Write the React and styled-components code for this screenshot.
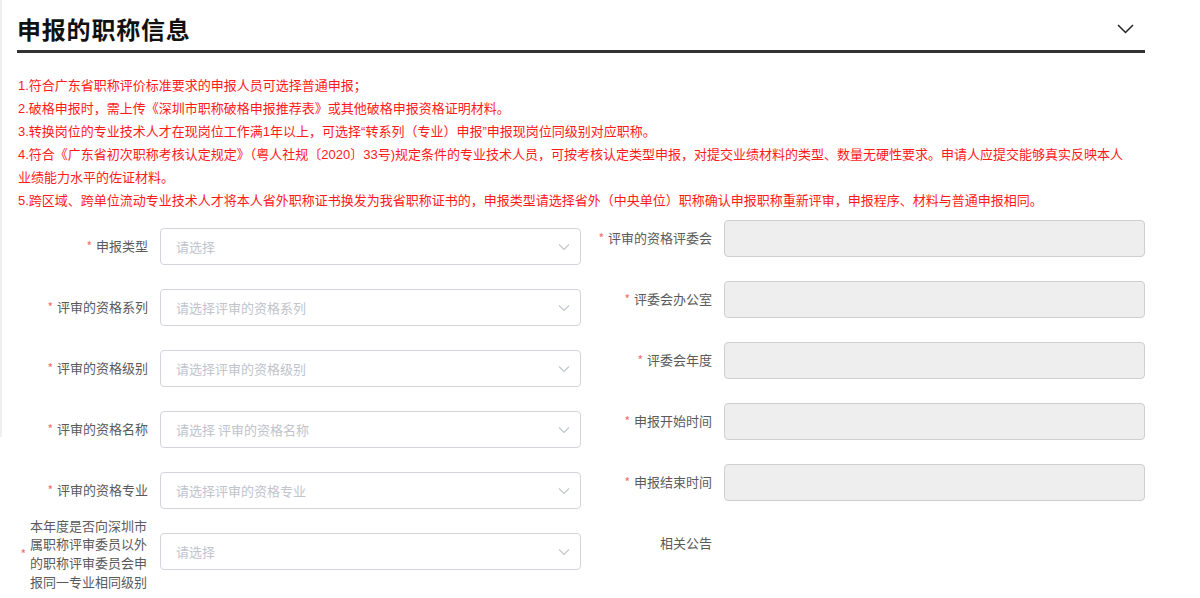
import React from "react";
import styled, { createGlobalStyle } from "styled-components";

const GlobalStyle = createGlobalStyle`
  html, body {
    margin: 0;
    padding: 0;
    background: #ffffff;
  }
  body {
    font-family: "Noto Sans CJK SC", "Noto Sans", sans-serif;
    font-size: 13px;
    color: #606266;
  }
  * { box-sizing: border-box; }
`;

const Page = styled.div`
  position: relative;
  width: 1200px;
  height: 598px;
  overflow: hidden;
  padding-left: 17px;
  &::before {
    content: "";
    position: absolute;
    left: 0;
    top: 0;
    width: 2px;
    height: 437px;
    background: #efefef;
  }
`;

const Section = styled.section`
  width: 1128px;
`;

const Header = styled.div`
  display: flex;
  align-items: center;
  justify-content: space-between;
  height: 53px;
  padding-top: 8px;
  padding-right: 11px;
  border-bottom: 3px solid #333333;
`;

const Title = styled.h2`
  margin: 0;
  font-size: 24px;
  font-weight: 700;
  color: #111111;
  line-height: 34px;
  letter-spacing: 0.8px;
`;

const Toggle = styled.button`
  border: 0;
  background: none;
  padding: 0;
  width: 18px;
  height: 12px;
  display: flex;
  align-items: center;
  justify-content: center;
  cursor: pointer;
`;

const Notes = styled.div`
  margin-top: 21px;
  width: 1118px;
  color: #ff1a1a;
  font-family: "Liberation Sans", "Noto Sans CJK SC", sans-serif;
  font-size: 13px;
  line-height: 23px;
  padding-left: 1px;
`;

const Note = styled.p`
  margin: 0;
`;

const Form = styled.div`
  display: grid;
  grid-template-columns: 564px 564px;
  margin-top: 8px;
`;

const Column = styled.div`
  display: flex;
  flex-direction: column;
  gap: 24px;
  padding-top: ${(p) => p.$offset || 0}px;
`;

const Item = styled.div`
  display: flex;
  align-items: center;
  height: 37px;
`;

const Label = styled.label`
  width: 143px;
  flex: none;
  padding-right: 12px;
  display: flex;
  align-items: center;
  justify-content: flex-end;
  text-align: right;
  color: #5a5a5a;
  font-size: 13px;
  line-height: 18.7px;
  margin-top: ${(p) => p.$shift || 0}px;
`;

const Star = styled.span`
  color: #f56c6c;
  margin-right: 4px;
  font-size: 12px;
`;

const Wrap = styled.span`
  width: ${(p) => (p.$wrap ? "118px" : "auto")};
  text-align: ${(p) => (p.$wrap ? "left" : "right")};
`;

const SelectBox = styled.div`
  flex: none;
  width: 421px;
  height: 37px;
  border: 1px solid #d3d5da;
  border-radius: 4px;
  background: #ffffff;
  display: flex;
  align-items: center;
  justify-content: space-between;
  padding: 0 10px 0 15px;
  color: #c0c4cc;
  font-size: 13px;
`;

const DisabledBox = styled.div`
  flex: none;
  width: 421px;
  height: 37px;
  border: 1px solid #cfcfcf;
  border-radius: 4px;
  background: #eeeeee;
`;

const Arrow = () => (
  <svg width="12" height="8" viewBox="0 0 12 8">
    <path d="M1 1.5 L6 6.5 L11 1.5" fill="none" stroke="#c0c4cc" strokeWidth="1.1" />
  </svg>
);

const leftFields = [
  { label: "申报类型", ph: "请选择" },
  { label: "评审的资格系列", ph: "请选择评审的资格系列" },
  { label: "评审的资格级别", ph: "请选择评审的资格级别" },
  { label: "评审的资格名称", ph: "请选择 评审的资格名称" },
  { label: "评审的资格专业", ph: "请选择评审的资格专业" },
  {
    label: "本年度是否向深圳市属职称评审委员以外的职称评审委员会申报同一专业相同级别",
    ph: "请选择",
    wrap: true,
  },
];

const rightFields = [
  { label: "评审的资格评委会", required: true },
  { label: "评委会办公室", required: true },
  { label: "评委会年度", required: true },
  { label: "申报开始时间", required: true },
  { label: "申报结束时间", required: true },
  { label: "相关公告", required: false, empty: true },
];

const notes = [
  "1.符合广东省职称评价标准要求的申报人员可选择普通申报；",
  "2.破格申报时，需上传《深圳市职称破格申报推荐表》或其他破格申报资格证明材料。",
  "3.转换岗位的专业技术人才在现岗位工作满1年以上，可选择“转系列（专业）申报”申报现岗位同级别对应职称。",
  "4.符合《广东省初次职称考核认定规定》（粤人社规〔2020〕33号)规定条件的专业技术人员，可按考核认定类型申报，对提交业绩材料的类型、数量无硬性要求。申请人应提交能够真实反映本人业绩能力水平的佐证材料。",
  "5.跨区域、跨单位流动专业技术人才将本人省外职称证书换发为我省职称证书的，申报类型请选择省外（中央单位）职称确认申报职称重新评审，申报程序、材料与普通申报相同。",
];

export default function App() {
  return (
    <>
      <GlobalStyle />
      <Page>
        <Section>
          <Header>
            <Title>申报的职称信息</Title>
            <Toggle aria-label="收起">
              <svg width="17" height="10" viewBox="0 0 17 10">
                <path d="M1 1 L8.5 8.5 L16 1" fill="none" stroke="#222" strokeWidth="1.5" />
              </svg>
            </Toggle>
          </Header>
          <Notes>
            {notes.map((n) => (
              <Note key={n}>{n}</Note>
            ))}
          </Notes>
          <Form>
            <Column $offset={8}>
              {leftFields.map((f) => (
                <Item key={f.label}>
                  <Label $shift={f.wrap ? 5 : 0}>
                    <Star>*</Star>
                    <Wrap $wrap={f.wrap}>{f.label}</Wrap>
                  </Label>
                  <SelectBox>
                    <span>{f.ph}</span>
                    <Arrow />
                  </SelectBox>
                </Item>
              ))}
            </Column>
            <Column>
              {rightFields.map((f) => (
                <Item key={f.label}>
                  <Label>
                    {f.required && <Star>*</Star>}
                    <Wrap>{f.label}</Wrap>
                  </Label>
                  {!f.empty && <DisabledBox />}
                </Item>
              ))}
            </Column>
          </Form>
        </Section>
      </Page>
    </>
  );
}
